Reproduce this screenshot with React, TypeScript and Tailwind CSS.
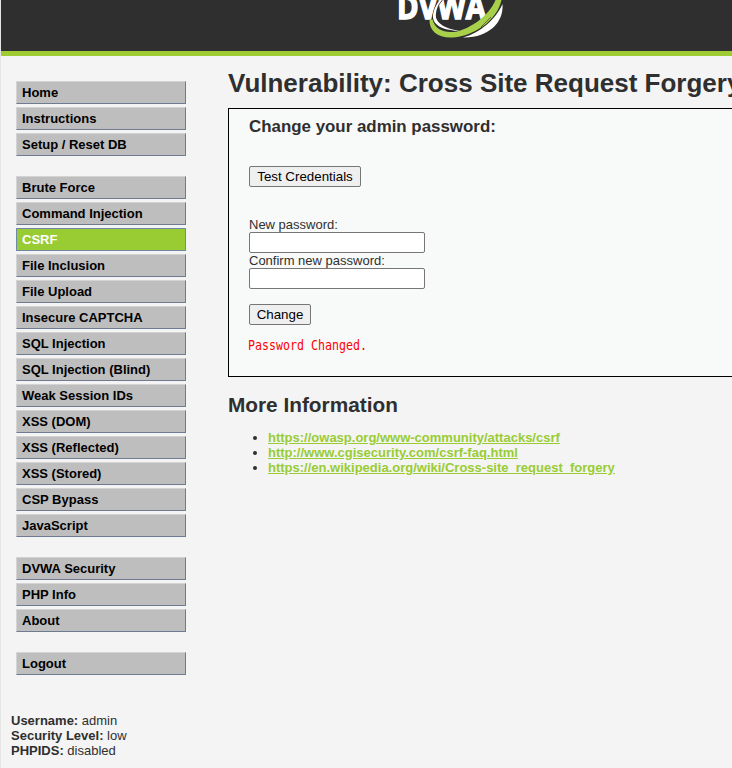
const groups: string[][] = [
  ['Home', 'Instructions', 'Setup / Reset DB'],
  [
    'Brute Force',
    'Command Injection',
    'CSRF',
    'File Inclusion',
    'File Upload',
    'Insecure CAPTCHA',
    'SQL Injection',
    'SQL Injection (Blind)',
    'Weak Session IDs',
    'XSS (DOM)',
    'XSS (Reflected)',
    'XSS (Stored)',
    'CSP Bypass',
    'JavaScript',
  ],
  ['DVWA Security', 'PHP Info', 'About'],
  ['Logout'],
];

const links = [
  'https://owasp.org/www-community/attacks/csrf',
  'http://www.cgisecurity.com/csrf-faq.html',
  'https://en.wikipedia.org/wiki/Cross-site_request_forgery',
];

function Logo() {
  return (
    <svg width="112" height="42" viewBox="395 0 112 42" className="ml-[394px] block shrink-0">
      <text x="397" y="19" fontFamily="Open Sans, sans-serif" fontWeight="700" fontSize="34" textLength="89" lengthAdjust="spacingAndGlyphs" fill="#fff" stroke="#fff" strokeWidth="1.5">DVWA</text>
      <path d="M439.500 0C434 8 432 14 433.500 20C436 27 446 30.500 460 31C446 29 437.500 24 436 17.500C435.500 11 437.500 5 442 0Z" fill="#fff" stroke="#2f2f2f" strokeWidth="1.200" paintOrder="stroke" />
      <path d="M429.500 19.500C429 31 438 38 452 37.500C473 36.500 497 21 501.500 0H495.500C491 12 475 27 457 31.500C445 33.500 435 30 432.500 19.500Z" fill="#a9d04b" />
      <path d="M502.500 4C504 22 489 38 463 37.500C480 33 496 19 502.500 4Z" fill="#fff" />
      <path d="M481 27L491 17" fill="none" stroke="#2f2f2f" strokeWidth="0.600" />
    </svg>
  );
}

function Field({ label }: { label: string }) {
  return (
    <label className="block">
      <span className="block h-[15px] leading-[15px]">{label}</span>
      <input type="password" className="block h-[21px] w-[176px] rounded-[2px] border border-[#767676] bg-white px-1 outline-none" />
    </label>
  );
}

export default function App() {
  return (
    <div className="h-[768px] w-[732px] overflow-hidden border-l border-[#e5e5e5] bg-[#f4f4f4] font-['Liberation_Sans',Arial,sans-serif] text-[13px] leading-[15px] text-[#2f2f2f]">
      <header className="h-[56px] border-b-[5px] border-[#9fcc32] bg-[#2f2f2f]">
        <Logo />
      </header>
      <div className="flex">
        <aside className="w-[227px] shrink-0 pt-[25px]">
          <nav className="ml-[15px] flex w-[170px] flex-col gap-5">
            {groups.map((group) => (
              <ul key={group[0]} className="flex flex-col gap-[3px]">
                {group.map((label) => (
                  <li
                    key={label}
                    className={`h-[23px] whitespace-nowrap border pl-[5px] font-bold leading-[21px] ${
                      label === 'CSRF'
                        ? 'border-[#708aa5] bg-[#99cc33] text-white'
                        : 'border-t-[#d3d3d3] border-r-[#6f7b90] border-b-[#6f7b90] border-l-[#d3d3d3] bg-[#bebebe] text-black'
                    }`}
                  >
                    {label}
                  </li>
                ))}
              </ul>
            ))}
          </nav>
          <div className="mt-[38px] pl-[10px]">
            <p><b>Username:</b> admin</p>
            <p><b>Security Level:</b> low</p>
            <p><b>PHPIDS:</b> disabled</p>
          </div>
        </aside>
        <main className="w-[640px] shrink-0 pt-[11px]">
          <h1 className="h-[41px] whitespace-nowrap text-[26px] font-bold leading-[32px]">Vulnerability: Cross Site Request Forgery</h1>
          <section className="h-[269px] border border-black bg-[#f8faf9] pl-5">
            <h3 className="mt-[8px] h-[20px] text-[16.9px] font-bold leading-[20px]">Change your admin password:</h3>
            <button className="mt-[29px] block h-[21px] w-[112px] rounded-[2px] border border-[#767676] bg-[#efefef] text-[13.333px] leading-[19px] text-black">Test Credentials</button>
            <form className="mt-[30px]">
              <Field label="New password:" />
              <Field label="Confirm new password:" />
              <button type="button" className="mt-[15px] block h-[21px] w-[62px] rounded-[2px] border border-[#767676] bg-[#efefef] text-[13.333px] leading-[19px] text-black">Change</button>
            </form>
            <pre className="-ml-px mt-[13px] scale-y-[1.15] font-['DejaVu_Sans_Mono',monospace] text-[11.63px] leading-[15px] text-[#f00]">Password Changed.</pre>
          </section>
          <h2 className="mt-[16px] text-[20.8px] font-bold leading-[24px]">More Information</h2>
          <ul className="mt-[13px] list-disc pl-10">
            {links.map((link) => (
              <li key={link} className="h-[15px]">
                <a className="whitespace-nowrap font-bold text-[#99cc33] underline">{link}</a>
              </li>
            ))}
          </ul>
        </main>
      </div>
    </div>
  );
}
